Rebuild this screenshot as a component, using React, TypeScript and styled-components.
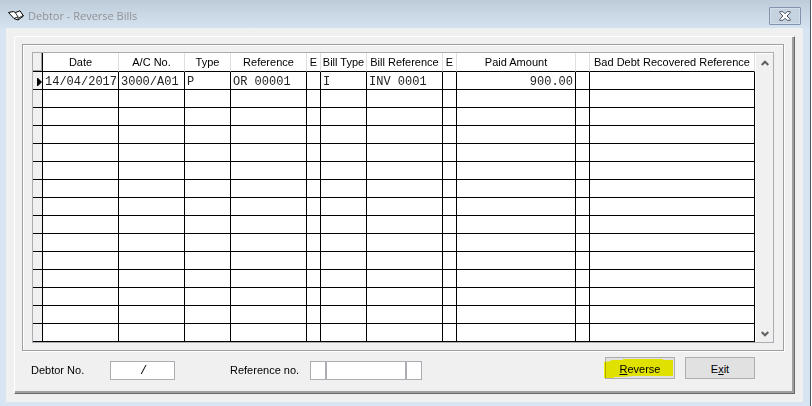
import React from "react";
import styled, { createGlobalStyle } from "styled-components";

const uiFont = `"Liberation Sans", Arial, sans-serif`;
const monoFont = `"Liberation Mono", "Courier New", monospace`;

const GlobalStyle = createGlobalStyle`
  *, *::before, *::after { box-sizing: border-box; }
  body { margin: 0; background: #fff; font: 11px/14px ${uiFont}; color: #000; }
`;

const Window = styled.div`
  display: flex;
  flex-direction: column;
  min-height: 100vh;
  margin-right: 1px;
  padding: 0 7px 5px 6px;
  border-right: 1px solid #4f555c;
  background: #d7e4f2;
`;

const TitleBar = styled.header`
  display: flex;
  align-items: center;
  gap: 4px;
  height: 28px;
  margin: 0 -7px 0 -6px;
  padding: 4px 9px 0 8px;
  background: linear-gradient(#becbd9, #d5e2f0);
`;

const Title = styled.h1`
  flex: 1;
  margin: 0;
  font: 11px/16px "Open Sans", "Noto Sans", sans-serif;
  color: #8f9296;
`;

const CloseButton = styled.button`
  display: flex;
  align-items: center;
  justify-content: center;
  width: 32px;
  height: 18px;
  padding: 0;
  border: 1px solid #8393ac;
  border-radius: 1px;
  background: #c5d2e0;
  box-shadow: inset 0 0 0 1px #d3deea;
`;

const Client = styled.main`
  flex: 1;
  padding: 8px;
  background: #f0f0f0;
`;

const Panel = styled.div`
  border: 1px solid #fff;
  border-right-color: #696969;
  border-bottom-color: #696969;
  box-shadow: inset -2px -2px 0 #a0a0a0;
  padding: 7px 10px 10px 7px;
`;

const Frame = styled.section`
  padding: 7px 9px;
  border: 1px solid #a0a0a0;
  box-shadow: 1px 1px 0 #fff, inset 1px 1px 0 #fff;
`;

const GridBox = styled.div`
  display: flex;
  border: 1px solid #abadb3;
  background: #fff;
`;

const Grid = styled.table`
  flex: 1;
  width: 0;
  table-layout: fixed;
  border-collapse: separate;
  border-spacing: 0;
`;

const Col = styled.col<{ $w?: number }>`
  width: ${(p) => (p.$w ? `${p.$w}px` : "auto")};
`;

const HeadCell = styled.th`
  height: 19px;
  padding: 0;
  border-right: 1px solid #e0e0e0;
  border-bottom: 1px solid #000;
  font-weight: 400;
  line-height: 18px;
  text-align: center;
  white-space: nowrap;
`;

const CornerCell = styled.td`
  padding: 0;
  border-right: 1px solid #000;
  border-bottom: 1px solid #000;
  background: #f0f0f0;
  box-shadow: inset -1px -1px 0 #a0a0a0;
`;

const Marker = styled.td`
  height: 18px;
  padding: 2px 0 0;
  border-right: 1px solid #000;
  border-bottom: 1px solid #000;
  background: #f0f0f0;
  line-height: 0;
  text-align: right;
`;

const Cell = styled.td<{ $right?: boolean }>`
  height: 18px;
  padding: 3px 2px 0;
  border-right: 1px solid #000;
  border-bottom: 1px solid #000;
  color: #222;
  font: 12px/14px ${monoFont};
  text-align: ${(p) => (p.$right ? "right" : "left")};
  white-space: nowrap;
`;

const ScrollBar = styled.div`
  display: flex;
  flex-direction: column;
  justify-content: space-between;
  width: 17px;
  margin: 1px 0 0 1px;
  background: #f0f0f0;
`;

const ScrollButton = styled.button`
  display: flex;
  align-items: center;
  justify-content: center;
  height: 17px;
  padding: 0;
  border: 0;
  background: none;
`;

const Footer = styled.form`
  display: flex;
  align-items: center;
  margin-top: 6px;
  padding: 0 29px 0 9px;
`;

const Field = styled.div`
  display: flex;
  align-items: center;
  margin-right: 55px;
`;

const Label = styled.label<{ $w: number }>`
  width: ${(p) => p.$w}px;
  white-space: nowrap;
`;

const Input = styled.input<{ $w: number }>`
  width: ${(p) => p.$w}px;
  height: 19px;
  padding: 2px 0 0 2px;
  border: 1px solid #abadb3;
  border-radius: 0;
  background: #fff;
  font: 12px/14px ${monoFont};
  text-align: center;
`;

const Actions = styled.div`
  display: flex;
  gap: 10px;
  margin-left: auto;
  padding-bottom: 4px;
`;

const Button = styled.button`
  position: relative;
  width: 70px;
  height: 22px;
  padding: 2px 0 0;
  border: 1px solid #adadad;
  background: #e1e1e1;
  color: #000;
  font: 11px/14px ${uiFont};
`;

const Highlight = styled.svg`
  position: absolute;
  top: 0;
  left: -2px;
  mix-blend-mode: multiply;
  pointer-events: none;
`;

const BookIcon = () => (
  <svg width="16" height="12" viewBox="0 0 16 12" aria-hidden="true">
    <path d="M.5 2.5 5.5 1.5 7.5 2.5 12 .8 15.5 6 10 10 6 8.5Z" fill="#fff" stroke="#000" strokeLinejoin="round" />
    <path d="M7.2 2.5 10 6.8 6 8.5M10 6.8V10M10.2 8.2 15 5.5" fill="none" stroke="#000" strokeWidth=".8" />
  </svg>
);

const CloseIcon = () => (
  <svg width="12" height="10" viewBox="0 0 12 10" aria-hidden="true">
    <path d="M.7.7H4L6 2.8 8 .7h3.3v1L8 5l3.3 3.3v1H8L6 7.2 4 9.3H.7v-1L4 5 .7 1.7Z" fill="#fff" stroke="#535666" />
  </svg>
);

const Chevron = ({ down }: { down?: boolean }) => (
  <svg width="8" height="6" viewBox="0 0 8 6" aria-hidden="true">
    <path d={down ? "M.7 1 4 4.3 7.3 1" : "M.7 5 4 1.7 7.3 5"} fill="none" stroke="#606060" strokeWidth="2" />
  </svg>
);

const columns: { label: string; width?: number; right?: boolean }[] = [
  { label: "Date", width: 76 },
  { label: "A/C No.", width: 66 },
  { label: "Type", width: 46 },
  { label: "Reference", width: 76 },
  { label: "E", width: 14 },
  { label: "Bill Type", width: 46 },
  { label: "Bill Reference", width: 76 },
  { label: "E", width: 14 },
  { label: "Paid Amount", width: 119, right: true },
  { label: "", width: 14 },
  { label: "Bad Debt Recovered Reference" },
];

const bill = ["14/04/2017", "3000/A01", "P", "OR 00001", "", "I", "INV 0001", "", "900.00", "", ""];
const rows: string[][] = [bill, ...Array.from({ length: 14 }, () => columns.map(() => ""))];

export default function App() {
  return (
    <>
      <GlobalStyle />
      <Window>
        <TitleBar>
          <BookIcon />
          <Title>Debtor - Reverse Bills</Title>
          <CloseButton aria-label="Close">
            <CloseIcon />
          </CloseButton>
        </TitleBar>
        <Client>
          <Panel>
            <Frame>
              <GridBox>
                <Grid>
                  <colgroup>
                    <Col $w={10} />
                    {columns.map((c, i) => (
                      <Col key={i} $w={c.width} />
                    ))}
                  </colgroup>
                  <thead>
                    <tr>
                      <CornerCell />
                      {columns.map((c, i) => (
                        <HeadCell key={i} scope="col">
                          {c.label}
                        </HeadCell>
                      ))}
                    </tr>
                  </thead>
                  <tbody>
                    {rows.map((row, r) => (
                      <tr key={r}>
                        <Marker>
                          {r === 0 && (
                            <svg width="5" height="8" viewBox="0 0 5 8" aria-hidden="true">
                              <path d="M0 0H1L5 4 1 8H0Z" />
                            </svg>
                          )}
                        </Marker>
                        {row.map((value, i) => (
                          <Cell key={i} $right={columns[i].right}>
                            {value}
                          </Cell>
                        ))}
                      </tr>
                    ))}
                  </tbody>
                </Grid>
                <ScrollBar>
                  <ScrollButton aria-label="Scroll up">
                    <Chevron />
                  </ScrollButton>
                  <ScrollButton aria-label="Scroll down">
                    <Chevron down />
                  </ScrollButton>
                </ScrollBar>
              </GridBox>
            </Frame>
            <Footer onSubmit={(e) => e.preventDefault()}>
              <Field>
                <Label htmlFor="debtor" $w={79}>
                  Debtor No.
                </Label>
                <Input id="debtor" $w={65} defaultValue="/" />
              </Field>
              <Field>
                <Label htmlFor="ref" $w={80}>
                  Reference no.
                </Label>
                <Input id="ref" $w={16} />
                <Input aria-label="Reference number" $w={80} />
                <Input aria-label="Reference suffix" $w={16} />
              </Field>
              <Actions>
                <Button type="button">
                  <u>R</u>everse
                  <Highlight width="70" height="20" viewBox="0 0 70 20" aria-hidden="true">
                    <path d="M0 4 7 3V2H19V1H59V2H69V18H30L17 19H10V20H0Z" fill="#ffff00" />
                  </Highlight>
                </Button>
                <Button type="button">
                  E<u>x</u>it
                </Button>
              </Actions>
            </Footer>
          </Panel>
        </Client>
      </Window>
    </>
  );
}
